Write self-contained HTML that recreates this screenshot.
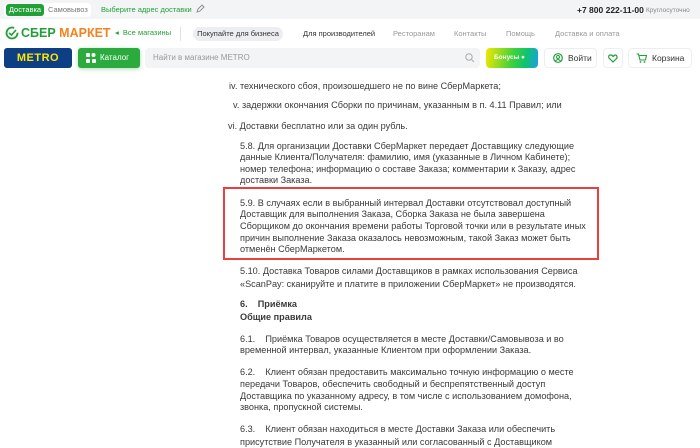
<!DOCTYPE html>
<html><head><meta charset="utf-8"><style>
*{margin:0;padding:0;box-sizing:border-box}
body{width:700px;height:446px;overflow:hidden;background:#fff;font-family:"Liberation Sans",sans-serif;position:relative;color:#333}
.a{position:absolute;white-space:nowrap}
.t{position:absolute;white-space:nowrap;font-size:9.15px;color:#3a3a3a;line-height:12px}
.b{font-weight:bold}
</style></head><body>
<div class="a" style="left:0;top:0;width:700px;height:19px;background:#f3f4f6"></div>
<div class="a" style="left:4px;top:3px;width:87px;height:14px;background:#fff;border-radius:4px"></div>
<div class="a" style="left:6px;top:4px;width:38px;height:12px;background:#21a038;border-radius:3px;color:#fff;font-size:7.5px;line-height:12px;text-align:center">Доставка</div>
<div class="a" style="left:48px;top:4px;font-size:7.5px;line-height:12px;color:#777">Самовывоз</div>
<div class="a" style="left:101px;top:4px;font-size:7.5px;line-height:12px;color:#21a038">Выберите адрес доставки</div>
<svg class="a" style="left:195px;top:4px" width="10" height="10" viewBox="0 0 10 10"><path d="M2 8l1-3 4-4 2 2-4 4z" fill="none" stroke="#888" stroke-width="0.9"/></svg>
<div class="a" style="left:577px;top:4px;font-size:8.5px;line-height:12px;color:#222;font-weight:bold">+7 800 222-11-00</div>
<div class="a" style="left:646px;top:5px;font-size:6.5px;line-height:11px;color:#888">Круглосуточно</div>

<svg class="a" style="left:5px;top:26px" width="14" height="14" viewBox="0 0 14 14"><circle cx="7" cy="7" r="5.5" fill="none" stroke="#21a038" stroke-width="1.8" stroke-dasharray="28 6"/><path d="M4 7l2.5 2L11 4" fill="none" stroke="#21a038" stroke-width="1.6"/></svg>
<div class="a b" style="left:21px;top:25px;font-size:12.5px;line-height:16px;color:#21a038">СБЕР <span style="color:#f5821f">МАРКЕТ</span></div>
<div class="a" style="left:115px;top:28px;font-size:7.5px;line-height:10px;color:#21a038">◂&nbsp;&nbsp;Все магазины</div>
<div class="a" style="left:180px;top:27px;width:1px;height:14px;background:#e2e2e2"></div>
<div class="a" style="left:193px;top:27px;width:90px;height:14px;background:#eceef1;border-radius:7px;font-size:7.5px;line-height:14px;text-align:center;color:#333">Покупайте для бизнеса</div>
<div class="a" style="left:303px;top:29px;font-size:7.5px;line-height:10px;color:#333">Для производителей</div>
<div class="a" style="left:393px;top:29px;font-size:7.5px;line-height:10px;color:#999">Ресторанам</div>
<div class="a" style="left:454px;top:29px;font-size:7.5px;line-height:10px;color:#999">Контакты</div>
<div class="a" style="left:506px;top:29px;font-size:7.5px;line-height:10px;color:#999">Помощь</div>
<div class="a" style="left:555px;top:29px;font-size:7.5px;line-height:10px;color:#999">Доставка и оплата</div>

<div class="a b" style="left:4px;top:48px;width:68px;height:20px;background:#0d3f85;border-radius:3px;color:#ffe500;font-size:11px;line-height:20px;text-align:center;letter-spacing:0.5px">METRO</div>
<div class="a" style="left:78px;top:48px;width:62px;height:20px;background:#2bab3e;border-radius:3px;box-shadow:0 1px 4px rgba(43,171,62,.4)"></div>
<svg class="a" style="left:86px;top:53px" width="10" height="10" viewBox="0 0 10 10" fill="#fff"><rect x="0" y="0" width="4" height="4" rx="1"/><circle cx="7.5" cy="2" r="2"/><rect x="0" y="6" width="4" height="4" rx="1"/><rect x="6" y="6" width="4" height="4" rx="1"/></svg>
<div class="a" style="left:100px;top:48px;font-size:8px;line-height:20px;color:#fff">Каталог</div>
<div class="a" style="left:145px;top:48px;width:335px;height:20px;background:#f3f4f6;border-radius:4px;font-size:8px;line-height:20px;color:#999;padding-left:8px">Найти в магазине METRO</div>
<svg class="a" style="left:465px;top:53px" width="10" height="10" viewBox="0 0 10 10"><circle cx="4" cy="4" r="3.2" fill="none" stroke="#aaa"/><path d="M6.5 6.5L9 9" stroke="#aaa"/></svg>
<div class="a" style="left:486px;top:48px;width:52px;height:20px;border-radius:4px;background:linear-gradient(100deg,#f2e900,#44d13b 50%,#0fc46a 75%,#1d9ee8);color:#fff;font-size:6.5px;line-height:20px;padding-left:8px;font-weight:bold">Бонусы ●</div>
<div class="a" style="left:544px;top:48px;width:53px;height:20px;border:1px solid #eee;border-radius:4px;font-size:8.5px;line-height:18px;color:#333;padding-left:23px">Войти</div>
<svg class="a" style="left:553px;top:53px" width="10" height="10" viewBox="0 0 10 10"><circle cx="5" cy="5" r="4.3" fill="none" stroke="#21a038" stroke-width="1.2"/><circle cx="5" cy="4" r="1.5" fill="none" stroke="#21a038"/><path d="M2.5 8q2.5-3 5 0" fill="none" stroke="#21a038"/></svg>
<div class="a" style="left:603px;top:48px;width:20px;height:20px;border:1px solid #eee;border-radius:4px"></div>
<svg class="a" style="left:608px;top:54px" width="10" height="9" viewBox="0 0 10 9"><path d="M5 8L1 4Q0 1 2.5 1T5 3Q6 1 7.5 1T9 4z" fill="none" stroke="#21a038" stroke-width="1.2"/></svg>
<div class="a" style="left:628px;top:48px;width:64px;height:20px;border:1px solid #eee;border-radius:4px;font-size:8.5px;line-height:18px;color:#333;padding-left:23px">Корзина</div>
<svg class="a" style="left:636px;top:53px" width="11" height="10" viewBox="0 0 11 10"><path d="M0.5 1h2l1.5 6h5.5l1-4.5H3" fill="none" stroke="#21a038" stroke-width="1.1"/><circle cx="4.5" cy="9" r="0.9" fill="#21a038"/><circle cx="8.5" cy="9" r="0.9" fill="#21a038"/></svg>

<div class="t" style="left:229px;top:80px">iv. технического сбоя, произошедшего не по вине СберМаркета;</div>
<div class="t" style="left:233px;top:99px">v. задержки окончания Сборки по причинам, указанным в п. 4.11 Правил; или</div>
<div class="t" style="left:228px;top:120px">vi. Доставки бесплатно или за один рубль.</div>
<div class="t" style="left:240px;top:140px">5.8. Для организации Доставки СберМаркет передает Доставщику следующие</div>
<div class="t" style="left:240px;top:151px">данные Клиента/Получателя: фамилию, имя (указанные в Личном Кабинете);</div>
<div class="t" style="left:240px;top:163px">номер телефона; информацию о составе Заказа; комментарии к Заказу, адрес</div>
<div class="t" style="left:240px;top:174px">доставки Заказа.</div>
<div class="a" style="left:223px;top:187px;width:376px;height:73px;border:2px solid #e8403c"></div>
<div class="t" style="left:240px;top:197px">5.9. В случаях если в выбранный интервал Доставки отсутствовал доступный</div>
<div class="t" style="left:240px;top:208px">Доставщик для выполнения Заказа, Сборка Заказа не была завершена</div>
<div class="t" style="left:240px;top:220px">Сборщиком до окончания времени работы Торговой точки или в результате иных</div>
<div class="t" style="left:240px;top:232px">причин выполнение Заказа оказалось невозможным, такой Заказ может быть</div>
<div class="t" style="left:240px;top:243px">отменён СберМаркетом.</div>
<div class="t" style="left:240px;top:265px">5.10. Доставка Товаров силами Доставщиков в рамках использования Сервиса</div>
<div class="t" style="left:240px;top:278px">«ScanPay: сканируйте и платите в приложении СберМаркет» не производятся.</div>
<div class="t b" style="left:240px;top:298px">6.&nbsp;&nbsp;&nbsp;&nbsp;Приёмка</div>
<div class="t b" style="left:240px;top:311px">Общие правила</div>
<div class="t" style="left:240px;top:333px">6.1.&nbsp;&nbsp;&nbsp;&nbsp;Приёмка Товаров осуществляется в месте Доставки/Самовывоза и во</div>
<div class="t" style="left:240px;top:344px">временной интервал, указанные Клиентом при оформлении Заказа.</div>
<div class="t" style="left:240px;top:366px">6.2.&nbsp;&nbsp;&nbsp;&nbsp;Клиент обязан предоставить максимально точную информацию о месте</div>
<div class="t" style="left:240px;top:378px">передачи Товаров, обеспечить свободный и беспрепятственный доступ</div>
<div class="t" style="left:240px;top:390px">Доставщика по указанному адресу, в том числе с использованием домофона,</div>
<div class="t" style="left:240px;top:401px">звонка, пропускной системы.</div>
<div class="t" style="left:240px;top:423px">6.3.&nbsp;&nbsp;&nbsp;&nbsp;Клиент обязан находиться в месте Доставки Заказа или обеспечить</div>
<div class="t" style="left:240px;top:436px">присутствие Получателя в указанный или согласованный с Доставщиком</div>
</body></html>
